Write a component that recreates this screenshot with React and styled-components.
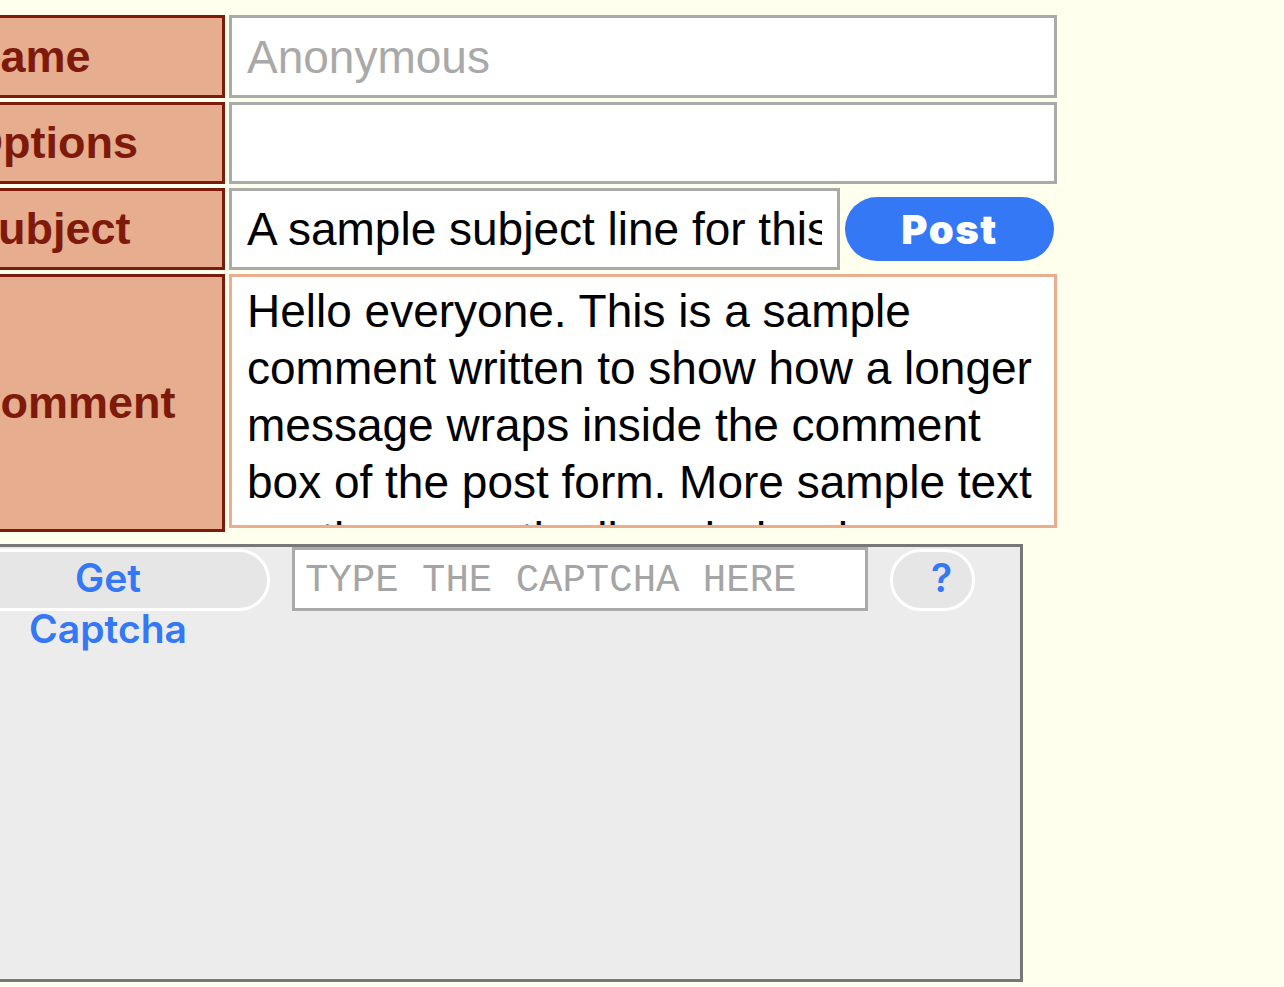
import React from 'react';
import styled, { createGlobalStyle } from 'styled-components';

const GlobalStyle = createGlobalStyle`
    html, body {
        margin: 0;
        padding: 0;
        background: #ffffee;
        overflow: hidden;
    }
    body {
        font-family: 'Liberation Sans', Arial, sans-serif;
    }
`;

const Page = styled.div`
    width: 1284px;
    height: 987px;
    background: #ffffee;
    padding-top: 15px;
    box-sizing: border-box;
`;

const Form = styled.div`
    display: grid;
    grid-template-columns: 265px 828px;
    grid-template-rows: 83px 82px 82px 258px;
    gap: 4px;
    margin-left: -40px;
`;

const Label = styled.div`
    box-sizing: border-box;
    background: #e6ad8e;
    border: 3px solid #7e1a0b;
    color: #7e1a0b;
    font-weight: bold;
    font-size: 45px;
    display: flex;
    align-items: center;
    padding-left: 5px;
`;

const Field = styled.div`
    display: flex;
    align-items: center;
    gap: 5px;
    align-self: ${props => (props.$tall ? 'start' : 'stretch')};
`;

const Input = styled.input`
    box-sizing: border-box;
    width: ${props => props.$width || '100%'};
    height: 100%;
    border: 3px solid #aaaaaa;
    background: #fff;
    font-family: 'Liberation Sans', Arial, sans-serif;
    font-size: 46px;
    color: #000;
    padding: 0 15px;
    outline: none;
    &::placeholder {
        color: #a9a9a9;
    }
`;

const PostButton = styled.button`
    width: 209px;
    height: 64px;
    border: none;
    border-radius: 32px;
    background: #3478f6;
    color: #fff;
    font-family: Inter, 'DejaVu Sans', sans-serif;
    font-weight: 900;
    font-size: 40px;
    letter-spacing: 1.5px;
    cursor: pointer;
`;

const TextArea = styled.textarea`
    box-sizing: border-box;
    width: 100%;
    height: 254px;
    border: 3px solid #e9ad90;
    background: #fff;
    font-family: 'Liberation Sans', Arial, sans-serif;
    font-size: 46px;
    line-height: 57px;
    padding: 6px 15px 0;
    resize: none;
    overflow: hidden;
    outline: none;
    color: #000;
`;

const CaptchaBox = styled.div`
    box-sizing: border-box;
    margin-top: 12px;
    margin-left: -60px;
    width: 1083px;
    height: 438px;
    background: #ececec;
    border: 3px solid #777;
    display: flex;
    align-items: flex-start;
    gap: 22px;
`;

const PillButton = styled.button`
    box-sizing: border-box;
    margin-top: 2px;
    margin-left: ${props => props.$offset || '0'};
    width: ${props => props.$width};
    height: 62px;
    border: 3px solid #fff;
    border-radius: 31px;
    background: #e6e6e6;
    color: #3478f6;
    font-family: Inter, 'Liberation Sans', sans-serif;
    font-weight: 600;
    font-size: 39px;
    line-height: 51px;
    display: flex;
    justify-content: center;
    align-items: flex-start;
    padding: 0 0 0 ${props => props.$shift || '0'};
    cursor: pointer;
`;

const ButtonText = styled.span`
    display: block;
    max-width: 200px;
    text-align: center;
`;

const CaptchaInput = styled.input`
    box-sizing: border-box;
    width: 576px;
    height: 64px;
    border: 3px solid #aaaaaa;
    background: #fff;
    font-family: 'Liberation Mono', 'Courier New', monospace;
    font-size: 39px;
    padding: 4px 10px 0;
    outline: none;
    &::placeholder {
        color: #a5a5a5;
    }
`;

function App() {
    return (
        <Page>
            <GlobalStyle />
            <Form>
                <Label>Name</Label>
                <Field>
                    <Input placeholder="Anonymous" />
                </Field>

                <Label>Options</Label>
                <Field>
                    <Input />
                </Field>

                <Label>Subject</Label>
                <Field>
                    <Input $width="611px" defaultValue="A sample subject line for this thread" />
                    <PostButton>Post</PostButton>
                </Field>

                <Label>Comment</Label>
                <Field $tall>
                    <TextArea
                        spellCheck={false}
                        defaultValue={
                            'Hello everyone. This is a sample comment written to show how a longer message wraps inside the comment box of the post form. More sample text continues on the lines below here.'
                        }
                    />
                </Field>
            </Form>

            <CaptchaBox>
                <PillButton $width="324px" $offset="3px">
                    <ButtonText>Get Captcha</ButtonText>
                </PillButton>
                <CaptchaInput placeholder="TYPE THE CAPTCHA HERE" />
                <PillButton $width="85px" $shift="18px">
                    <ButtonText>?</ButtonText>
                </PillButton>
            </CaptchaBox>
        </Page>
    );
}

export default App;
